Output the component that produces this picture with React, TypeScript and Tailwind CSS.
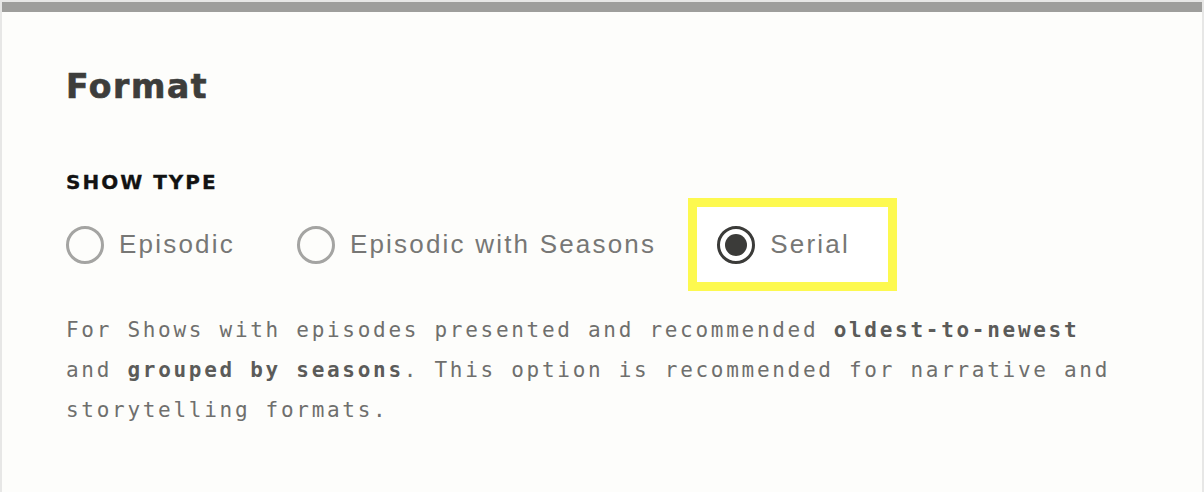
import { ReactNode } from "react";

interface RadioProps {
    label: string;
    checked?: boolean;
}

function RadioOption({ label, checked = false }: RadioProps) {
    return (
        <label className="flex items-center gap-[15px] cursor-pointer">
            {checked ? (
                <span className="flex h-[38px] w-[38px] items-center justify-center rounded-full border-[3px] border-[#3b3b39]">
                    <span className="h-[22px] w-[22px] rounded-full bg-[#3b3b39]" />
                </span>
            ) : (
                <span className="h-[38px] w-[38px] rounded-full border-[3px] border-[#a4a4a2]" />
            )}
            <span className="font-['Liberation_Sans',Arial,sans-serif] text-[26px] tracking-[2.2px] text-[#777775]">
                {label}
            </span>
        </label>
    );
}

function Strong({ children }: { children: ReactNode }) {
    return <strong className="font-bold text-[#5b5b59]">{children}</strong>;
}

export default function App() {
    return (
        <div className="h-[492px] w-[1204px] bg-[#e7e7e6] pl-[2px] pr-[2px] pt-[2px]">
            <div className="h-[10px] w-full bg-[#9e9e9c]" />
            <div className="h-[480px] bg-[#fdfdfb] pl-[64px] pt-[58px]">
                <h2 className="font-['DejaVu_Sans',sans-serif] text-[33px] font-bold leading-[34px] tracking-[1.6px] text-[#3d3d3b] [-webkit-text-stroke:0.7px_#3d3d3b]">
                    Format
                </h2>

                <h3 className="mt-[66px] font-['DejaVu_Sans',sans-serif] text-[20px] font-bold leading-[24px] tracking-[2px] text-[#121212] [-webkit-text-stroke:0.3px_#121212]">
                    SHOW TYPE
                </h3>

                <div className="mt-[4px] flex items-center">
                    <RadioOption label="Episodic" />
                    <div className="ml-[62px]">
                        <RadioOption label="Episodic with Seasons" />
                    </div>
                    <div className="ml-[32px] border-[9px] border-[#fdf94f] bg-white py-[18px] pl-[20px] pr-[38px]">
                        <RadioOption label="Serial" checked />
                    </div>
                </div>

                <p className="mt-[19px] w-[1060px] font-['DejaVu_Sans_Mono',monospace] text-[21px] leading-[40px] tracking-[2.71px] text-[#6f6f6d]">
                    For Shows with episodes presented and recommended <Strong>oldest-to-newest</Strong> and{" "}
                    <Strong>grouped by seasons</Strong>. This option is recommended for narrative and storytelling
                    formats.
                </p>
            </div>
        </div>
    );
}
